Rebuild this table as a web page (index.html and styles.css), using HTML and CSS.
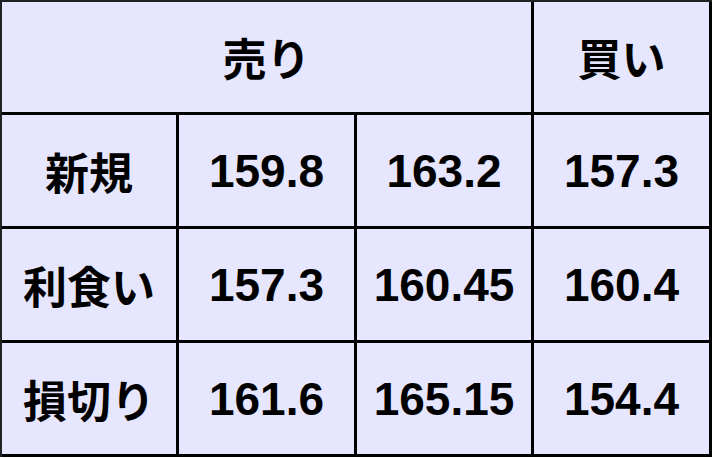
FILE: index.html
```html
<!DOCTYPE html>
<html lang="ja">
<head>
<meta charset="utf-8">
<title>売り・買い</title>
<link rel="stylesheet" href="styles.css">
</head>
<body>
<table class="price-table">
  <colgroup>
    <col class="c1"><col class="c2"><col class="c3"><col class="c4">
  </colgroup>
  <tr class="head-row">
    <td class="label" colspan="3">売り</td>
    <td class="label">買い</td>
  </tr>
  <tr class="row">
    <td class="label">新規</td>
    <td class="num">159.8</td>
    <td class="num">163.2</td>
    <td class="num">157.3</td>
  </tr>
  <tr class="row">
    <td class="label">利食い</td>
    <td class="num">157.3</td>
    <td class="num">160.45</td>
    <td class="num">160.4</td>
  </tr>
  <tr class="row">
    <td class="label">損切り</td>
    <td class="num">161.6</td>
    <td class="num">165.15</td>
    <td class="num">154.4</td>
  </tr>
</table>
</body>
</html>
```
FILE: styles.css
```css
html, body {
  margin: 0;
  padding: 0;
  background: #ffffff;
}

.price-table {
  border-collapse: separate;
  border-spacing: 0;
  table-layout: fixed;
  width: 712px;
  border-left: 2px solid #222;
  border-top: 2px solid #222;
  background: #e6e6ff;
  color: #000;
}

.c1 { width: 177px; }
.c2 { width: 178px; }
.c3 { width: 177px; }
.c4 { width: 178px; }

.price-table td {
  box-sizing: border-box;
  padding: 0;
  border-right: 3px solid #000;
  border-bottom: 3px solid #000;
  text-align: center;
  vertical-align: middle;
  white-space: nowrap;
}

.head-row td { height: 113px; }
.row td { height: 114px; }

.label {
  font-family: "Noto Sans CJK JP", "Noto Sans", sans-serif;
  font-weight: 700;
  font-size: 44px;
  line-height: 1;
}

.num {
  font-family: "Liberation Sans", Arial, sans-serif;
  font-weight: 700;
  font-size: 46px;
  line-height: 1;
}
```
